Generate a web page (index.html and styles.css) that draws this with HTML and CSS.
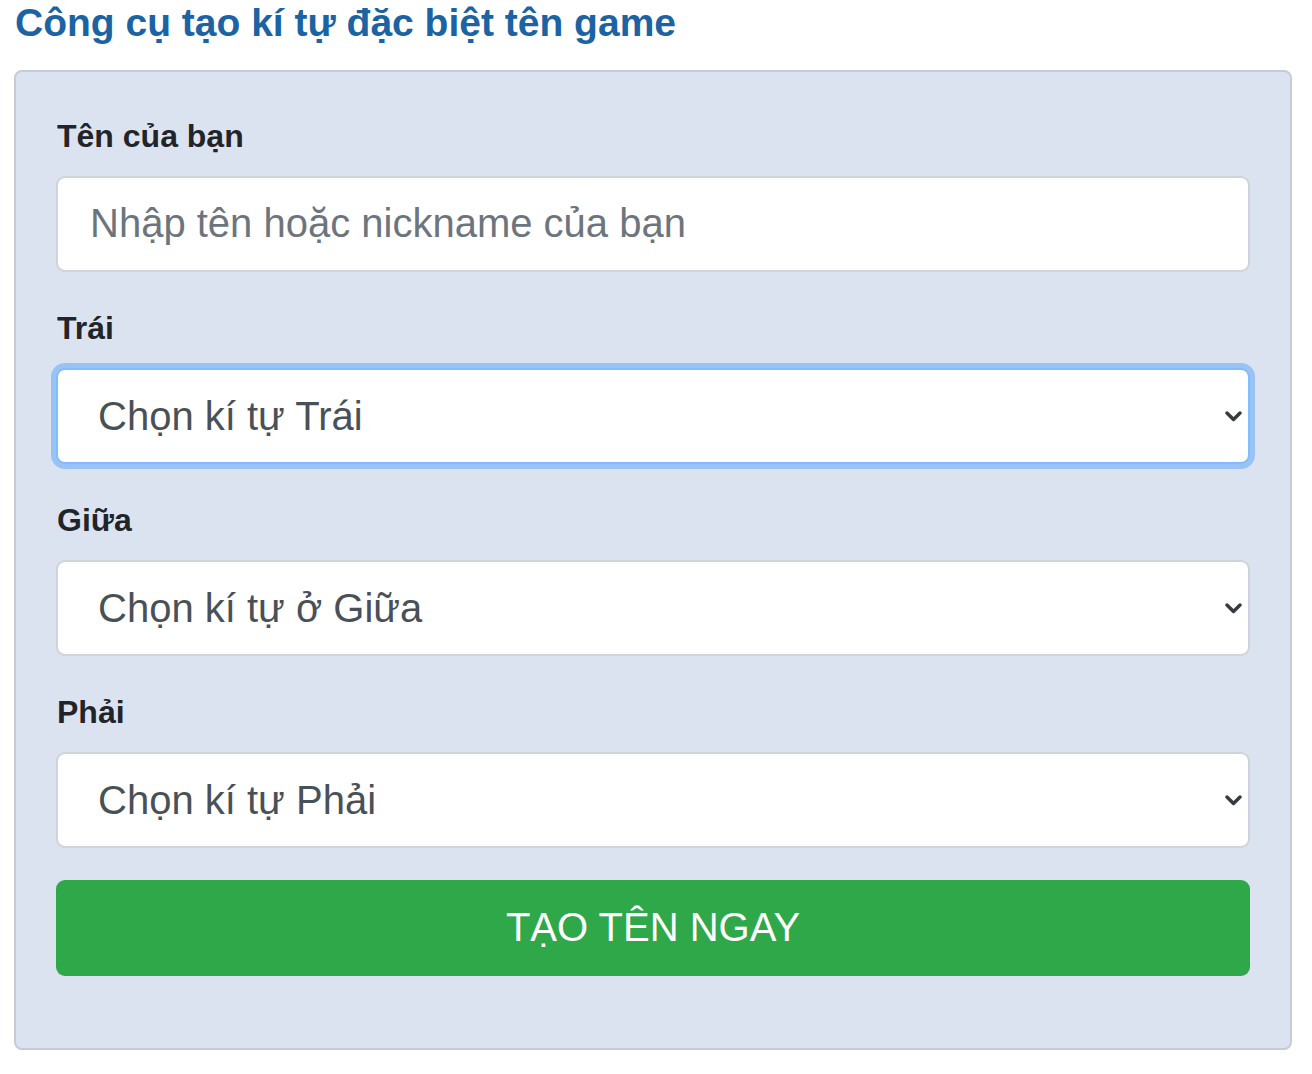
FILE: index.html
```html
<!DOCTYPE html>
<html lang="vi">

<head>
    <meta charset="UTF-8">
    <meta name="viewport" content="width=device-width, initial-scale=1.0">
    <title>Công cụ tạo kí tự đặc biệt tên game</title>
    <link rel="stylesheet" href="styles.css">
</head>

<body>
    <div class="container">
        <h1 class="page-title">Công cụ tạo kí tự đặc biệt tên game</h1>

        <div class="card">
            <form id="nameForm">
                <div class="form-group">
                    <label for="nickname">Tên của bạn</label>
                    <input type="text" id="nickname" class="form-control" placeholder="Nhập tên hoặc nickname của bạn">
                </div>

                <div class="form-group">
                    <label for="left">Trái</label>
                    <div class="select-wrap">
                        <select id="left" class="form-select focused">
                            <option>Chọn kí tự Trái</option>
                        </select>
                        <svg class="chevron" width="17" height="11" viewBox="0 0 17 11"><path d="M2 2 L8.5 8.5 L15 2" fill="none" stroke="#343a40" stroke-width="3.4" stroke-linecap="round" stroke-linejoin="round"/></svg>
                    </div>
                </div>

                <div class="form-group">
                    <label for="middle">Giữa</label>
                    <div class="select-wrap">
                        <select id="middle" class="form-select">
                            <option>Chọn kí tự ở Giữa</option>
                        </select>
                        <svg class="chevron" width="17" height="11" viewBox="0 0 17 11"><path d="M2 2 L8.5 8.5 L15 2" fill="none" stroke="#343a40" stroke-width="3.4" stroke-linecap="round" stroke-linejoin="round"/></svg>
                    </div>
                </div>

                <div class="form-group">
                    <label for="right">Phải</label>
                    <div class="select-wrap">
                        <select id="right" class="form-select">
                            <option>Chọn kí tự Phải</option>
                        </select>
                        <svg class="chevron" width="17" height="11" viewBox="0 0 17 11"><path d="M2 2 L8.5 8.5 L15 2" fill="none" stroke="#343a40" stroke-width="3.4" stroke-linecap="round" stroke-linejoin="round"/></svg>
                    </div>
                </div>

                <button type="button" class="btn-create">Tạo tên ngay</button>
            </form>
        </div>
    </div>
</body>

</html>
```

FILE: styles.css
```css
body {
    font-family: "Liberation Sans", Arial, sans-serif;
    margin: 0;
    color: #212529;
}

.container {
    padding: 0 20px 0 14px;
}

.page-title {
    font-size: 39px;
    line-height: 1.2;
    font-weight: bold;
    color: #1b63a3;
    margin: 0 0 23px 1px;
}

.card {
    background-color: #dce3f0;
    border: 2px solid #c5cbd7;
    border-radius: 8px;
    padding: 40px 40px 72px 40px;
}

.form-group {
    margin-bottom: 32px;
}

label {
    display: block;
    font-size: 32px;
    line-height: 48px;
    font-weight: bold;
    margin-bottom: 16px;
    margin-left: 1px;
}

.form-control,
.form-select {
    display: block;
    box-sizing: border-box;
    width: 100%;
    height: 96px;
    font-family: inherit;
    font-size: 40px;
    color: #495057;
    background-color: #fff;
    border: 2px solid #ced4da;
    border-radius: 9px;
    outline: none;
}

.form-control {
    padding: 16px 32px;
}

.form-control::placeholder {
    color: #6c757d;
}

.select-wrap {
    position: relative;
}

.form-select {
    appearance: none;
    -webkit-appearance: none;
    padding: 0 60px 0 40px;
}

.form-select.focused {
    border-color: #80bdff;
    box-shadow: 0 0 0 5px rgba(0, 123, 255, 0.3);
}

.chevron {
    position: absolute;
    right: 8px;
    top: 50%;
    margin-top: -5px;
    pointer-events: none;
}

.btn-create {
    display: block;
    width: 100%;
    height: 96px;
    font-family: inherit;
    font-size: 40px;
    text-transform: uppercase;
    color: #fff;
    background-color: #2fa84a;
    border: none;
    border-radius: 9px;
    cursor: pointer;
}
```
